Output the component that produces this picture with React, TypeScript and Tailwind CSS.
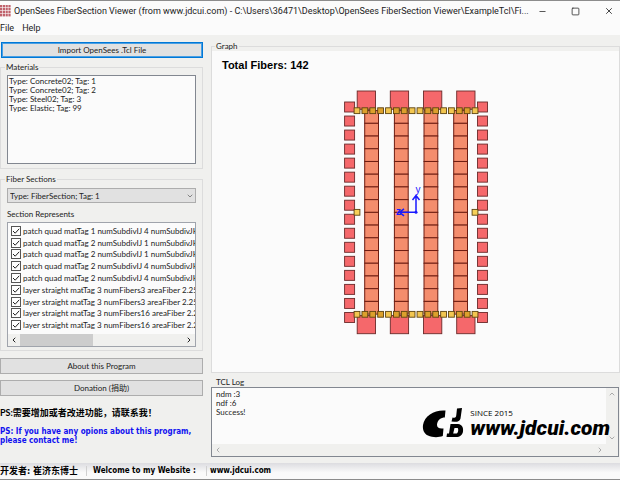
import { useState } from "react";
import { ChevronDown, ChevronLeft, ChevronRight, ChevronUp, Minus, Square, X } from "lucide-react";

const materials = [
  "Type: Concrete02; Tag: 1",
  "Type: Concrete02; Tag: 2",
  "Type: Steel02; Tag: 3",
  "Type: Elastic; Tag: 99",
];

const sectionItems = [
  "patch quad matTag 1 numSubdivIJ 4 numSubdivJK1",
  "patch quad matTag 2 numSubdivIJ 1 numSubdivJK1",
  "patch quad matTag 2 numSubdivIJ 1 numSubdivJK1",
  "patch quad matTag 2 numSubdivIJ 4 numSubdivJK1",
  "patch quad matTag 2 numSubdivIJ 4 numSubdivJK1",
  "layer straight matTag 3 numFibers3 areaFiber 2.25",
  "layer straight matTag 3 numFibers3 areaFiber 2.25",
  "layer straight matTag 3 numFibers16 areaFiber 2.2",
  "layer straight matTag 3 numFibers16 areaFiber 2.2",
];

const range = (n: number) => Array.from({ length: n }, (_, i) => i);

const columnsX = [364.7, 394.4, 424, 453.7];
const capsX = [357.2, 390.3, 423.5, 456.7];

const overlapsColumn = (x: number) => columnsX.some((c) => x > c - 2 && x < c + 16);

const AppIcon = () => (
  <svg viewBox="0 0 11 12" className="h-3 w-[11px] shrink-0">
    {range(4).map((r) =>
      range(4).map((c) => (
        <rect key={`${r}-${c}`} x={c * 2.8} y={r * 3} width="2.2" height="2.4" fill="#c0616b" />
      ))
    )}
  </svg>
);

const SectionGraph = () => (
  <svg viewBox="341 87 150 250" className="h-[250px] w-[150px]">
    <g fill="#f5686b" stroke="#6b2a2a" strokeWidth="0.9">
      {range(16).map((i) => (
        <g key={i}>
          <rect x="344.6" y={102 + i * 14.03} width="10" height="10" />
          <rect x="477.5" y={102 + i * 14.03} width="10" height="10" />
        </g>
      ))}
      {capsX.map((x) => (
        <g key={x}>
          <rect x={x} y="91" width="18.3" height="18.3" />
          <rect x={x} y="315.4" width="18.3" height="18.3" />
        </g>
      ))}
    </g>
    <g fill="#f48d6d" stroke="#6e1d12" strokeWidth="1">
      {columnsX.map((x) =>
        range(16).map((i) => (
          <rect key={`${x}-${i}`} x={x} y={110.6 + i * 12.72} width="13.8" height="12.72" />
        ))
      )}
    </g>
    <g stroke="#5c4310" strokeWidth="0.9">
      {range(16).map((i) => {
        const x = 357 + i * 7.87;
        const fill = overlapsColumn(x) ? "#dca02c" : "#f2c650";
        return (
          <g key={i} fill={fill}>
            <rect x={x - 2.9} y="107.8" width="5.8" height="5.8" />
            <rect x={x - 2.9} y="311.4" width="5.8" height="5.8" />
          </g>
        );
      })}
      <rect x="354.1" y="209.4" width="5.8" height="5.8" fill="#f7d058" />
      <rect x="472.1" y="209.4" width="5.8" height="5.8" fill="#f7d058" />
    </g>
    <g stroke="#1a1aff" strokeWidth="1.5" fill="none">
      <path d="M416 212.3V196M412.5 200L416 195.5L419.5 200" />
      <path d="M416 212.3H399M404 208.8L399.5 212.3L404 215.8" />
    </g>
    <circle cx="416" cy="212.3" r="1.5" fill="#1a1aff" />
    <text x="415.5" y="192.5" fontSize="10" fill="#1a1aff" className="font-['Liberation_Sans']">y</text>
    <text x="396" y="215" fontSize="10" fill="#1a1aff" className="font-['Liberation_Sans'] font-bold">z</text>
  </svg>
);

const Logo = () => (
  <div className="flex items-end text-black">
    <svg viewBox="0 0 42 30" className="h-[30px] w-[42px]" fill="currentColor">
      <path d="M23.500 2.500L22.800 9.500C19 9.500 15.500 12 15 16.500C14.800 19.500 17 21 21.500 20.500L20.800 28C17 29.500 10.500 29.700 6 27.500C1.500 25.500 0.500 21 1 17C2.500 7.500 13 1.500 23.500 2.500Z" />
      <path d="M35 0.500L40 0L38.500 10.500C38 13 35.500 14 32.500 13.800L29.500 13.500L30.500 9.500C33.500 10 34 9.500 34.300 7Z" />
      <path fillRule="evenodd" d="M28.500 16H36C40.500 16.500 41.500 20 41 23.500C40.500 27 38 29 34 29H24.500L25 25.500H27ZM32.500 20L31.200 25.500H34.500C36.500 25 36.700 20.500 35.500 20Z" />
    </svg>
    <div className="ml-1.5 flex flex-col">
      <span className="font-['Open_Sans',sans-serif] text-[8px] leading-[10px]">SINCE 2015</span>
      <span className="font-['Roboto',sans-serif] text-[21px] leading-[20px] font-black italic">www.jdcui.com</span>
    </div>
  </div>
);

const SectionItem = ({ label }: { label: string }) => {
  const [checked, setChecked] = useState(true);

  return (
    <label className="flex items-center gap-0.5 whitespace-nowrap">
      <span className="relative size-[10px] shrink-0">
        <input
          type="checkbox"
          checked={checked}
          onChange={() => setChecked((prev) => !prev)}
          className="block size-[10px] appearance-none border border-[#555] bg-white"
        />
        {checked && (
          <svg viewBox="0 0 10 10" className="pointer-events-none absolute inset-0" fill="none" stroke="#222">
            <path d="M2 5L4.200 7.200L8.200 2.800" />
          </svg>
        )}
      </span>
      {label}
    </label>
  );
};

const App = () => {
  return (
    <div className="flex min-h-screen flex-col overflow-hidden border-y border-[#8c8c8c] bg-[#f0f0ee] font-['Lato','Noto_Sans_CJK_SC',sans-serif] text-[8px] leading-[10px] text-[#222]">
      <header className="bg-[#fbfbfb] font-['Roboto',sans-serif]">
        <div className="flex h-5 items-center">
          <AppIcon />
          <h1 className="ml-[3px] flex-1 whitespace-nowrap text-[9px] leading-5">
            OpenSees FiberSection Viewer (from www.jdcui.com) - C:\Users\36471\Desktop\OpenSees FiberSection Viewer\ExampleTcl\Fi...
          </h1>
          <div className="flex items-center gap-6 pr-1.5">
            <button aria-label="Minimize"><Minus size={9} strokeWidth={2} /></button>
            <button aria-label="Maximize"><Square size={9} strokeWidth={2} /></button>
            <button aria-label="Close"><X size={10} strokeWidth={2} /></button>
          </div>
        </div>
        <nav className="flex h-3.5 items-center gap-2 text-[9px]">
          <button>File</button>
          <button>Help</button>
        </nav>
      </header>

      <main className="flex flex-1 gap-2">
        <div className="flex w-[203px] shrink-0 flex-col pt-[7px]">
          <button className="ml-px h-4 border border-[#0078d7] bg-[#e1e1e1] outline outline-1 -outline-offset-2 outline-[#4a9fe3]">
            Import OpenSees .Tcl File
          </button>

          <fieldset className="mt-1 border border-[#dcdcdc] px-1.5 pb-1">
            <legend className="-ml-0.5 px-px">Materials</legend>
            <ul className="mt-[3px] h-[89px] border border-[#828790] bg-[#fbfbfb] px-px pt-px leading-[9px]">
              {materials.map((material) => (
                <li key={material}>{material}</li>
              ))}
            </ul>
          </fieldset>

          <fieldset className="mt-[5px] min-w-0 border border-[#dcdcdc] px-1.5 pb-[3px]">
            <legend className="-ml-0.5 px-px">Fiber Sections</legend>
            <div className="relative mt-1">
              <select aria-label="Fiber section" className="block h-[15px] w-full appearance-none border border-[#adadad] bg-[#e1e1e1] px-0.5">
                <option>Type: FiberSection; Tag: 1</option>
              </select>
              <ChevronDown size={8} className="pointer-events-none absolute top-1 right-0.5 text-[#555]" />
            </div>
            <h2 className="mt-1.5">Section Represents</h2>
            <div className="mt-[3px] border border-[#a0a4ac] bg-[#fbfbfb]">
              <div className="grid h-[108px] auto-rows-fr overflow-hidden pt-0.5 pl-[3px]">
                {sectionItems.map((item, i) => (
                  <SectionItem key={i} label={item} />
                ))}
              </div>
              <div className="mt-[3px] flex h-3 items-center gap-0.5 bg-[#f0f0ee] px-0.5">
                <button aria-label="Scroll left"><ChevronLeft size={8} strokeWidth={3} /></button>
                <div className="flex-1 self-stretch">
                  <div className="h-full w-[45%] bg-[#cdcdcd]" />
                </div>
                <button aria-label="Scroll right"><ChevronRight size={8} strokeWidth={3} /></button>
              </div>
            </div>
          </fieldset>

          <button className="mt-[7px] h-4 border border-[#adadad] bg-[#e1e1e1]">About this Program</button>
          <button className="mt-1.5 h-4 border border-[#adadad] bg-[#e1e1e1]">Donation (捐助)</button>

          <p className="mt-[11px] text-[9px] leading-3 font-bold text-black">PS:需要增加或者改进功能，请联系我！</p>
          <p className="mt-2 font-['DejaVu_Sans_Condensed',sans-serif] leading-[9px] font-bold text-[#1212f0]">
            PS: If you have any opions about this program, please contact me!
          </p>
        </div>

        <div className="flex min-w-0 flex-1 flex-col pt-1.5 pb-1.5">
          <fieldset className="min-w-0 border border-[#dcdcdc]">
            <legend className="ml-[3px] px-px">Graph</legend>
            <div className="relative flex h-[321px] items-center justify-center bg-[#fbfbfb]">
              <p className="absolute top-2 left-2.5 font-['Liberation_Sans',sans-serif] text-[11px] leading-3 font-bold text-black">
                Total Fibers: 142
              </p>
              <SectionGraph />
            </div>
          </fieldset>

          <fieldset className="mt-1 min-w-0">
            <legend className="ml-1 px-px">TCL Log</legend>
            <div className="relative mr-px border border-[#828790] bg-[#fbfbfb]">
              <div className="flex">
                <textarea
                  aria-label="TCL Log"
                  readOnly
                  defaultValue={"ndm :3\nndf :6\nSuccess!"}
                  className="block h-14 flex-1 resize-none overflow-hidden px-1 pt-0.5 leading-[9px] outline-none"
                />
                <div className="flex w-3 flex-col items-center justify-between bg-[#f0f0ee] py-0.5 text-[#aaa]">
                  <button aria-label="Scroll up"><ChevronUp size={8} strokeWidth={3} /></button>
                  <button aria-label="Scroll down"><ChevronDown size={8} strokeWidth={3} /></button>
                </div>
              </div>
              <div className="flex h-3 items-center justify-between bg-[#f0f0ee] pr-3.5 pl-0.5 text-[#aaa]">
                <button aria-label="Scroll left"><ChevronLeft size={8} strokeWidth={3} /></button>
                <button aria-label="Scroll right"><ChevronRight size={8} strokeWidth={3} /></button>
              </div>
              <div className="absolute right-2 bottom-[18px]">
                <Logo />
              </div>
            </div>
          </fieldset>
        </div>
      </main>

      <footer className="flex h-4 items-center bg-linear-to-b from-[#dcdce0] to-[#fafafa] to-60% font-['DejaVu_Sans_Condensed','Noto_Sans_CJK_SC',sans-serif] font-bold text-black">
        <span className="w-[86px] text-[9px]">开发者: 崔济东博士</span>
        <span className="w-[120px] border-l border-[#d0d0d0] pl-1.5">Welcome to my Website :</span>
        <a href="#" className="border-l border-[#d0d0d0] pl-[3px]">www.jdcui.com</a>
      </footer>
    </div>
  );
};

export default App;
